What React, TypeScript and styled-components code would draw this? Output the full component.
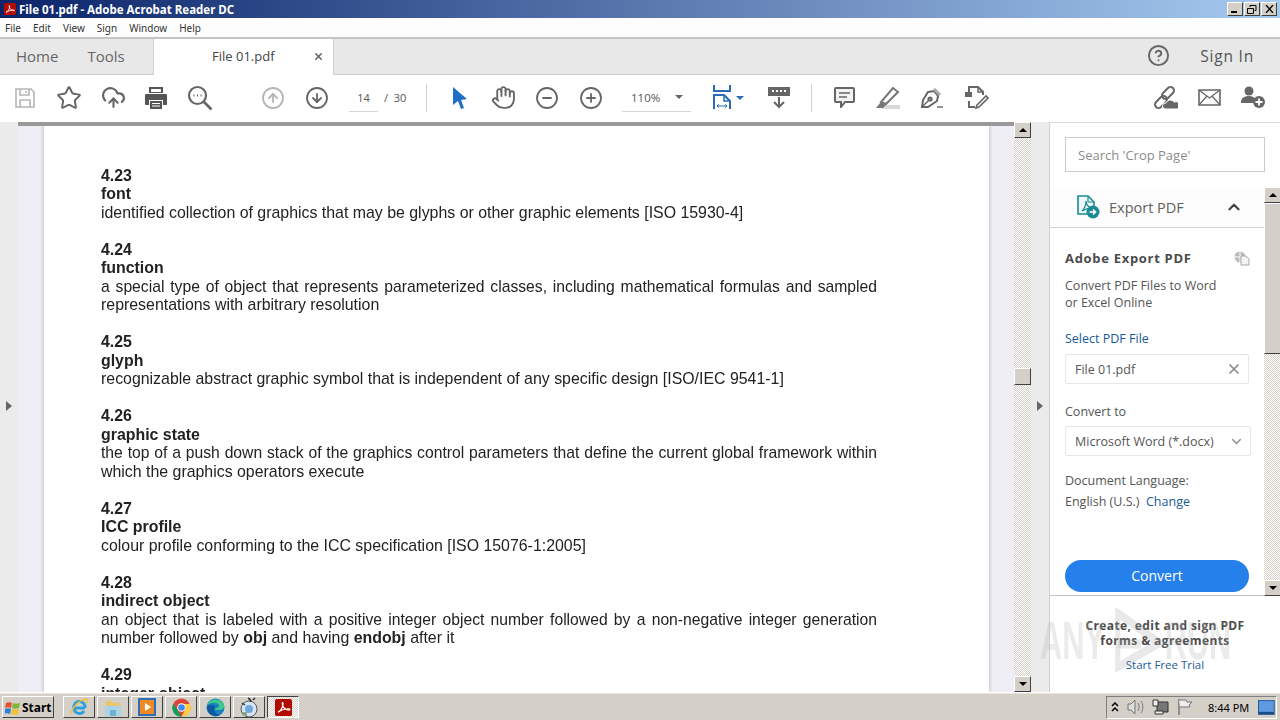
import React from "react";
import styled, { createGlobalStyle } from "styled-components";
import {
  Star,
  CloudUpload,
  CircleArrowUp,
  CircleArrowDown,
  CircleMinus,
  CirclePlus,
  CircleHelp,
  Hand,
  X,
  ChevronUp,
  ChevronDown,
} from "lucide-react";

const ui = `"Open Sans", "Noto Sans", sans-serif`;
const tahoma = `"Noto Sans", "DejaVu Sans", sans-serif`;

const GlobalStyle = createGlobalStyle`
  html, body { margin: 0; padding: 0; height: 100%; overflow: hidden; background: #fff; }
  * { box-sizing: border-box; }
`;

const Screen = styled.div`
  width: 1280px;
  height: 720px;
  display: flex;
  flex-direction: column;
  position: relative;
  overflow: hidden;
  font-family: ${ui};
`;

/* window chrome */
const TitleBar = styled.div`
  height: 18px;
  flex: none;
  display: flex;
  align-items: center;
  padding: 0 3px 0 4px;
  gap: 3px;
  background: linear-gradient(90deg, #0a246a 0%, #a6caf0 100%);
  color: #fff;
  font: 700 11.5px ${tahoma};
`;

const TitleText = styled.span`
  flex: 1;
`;

const WinButton = styled.div`
  width: 16px;
  height: 14px;
  margin-left: -2px;
  background: #d4d0c8;
  border: 1px solid;
  border-color: #fff #404040 #404040 #fff;
  display: flex;
  align-items: center;
  justify-content: center;
`;

const MenuBar = styled.div`
  height: 19px;
  flex: none;
  display: flex;
  align-items: center;
  gap: 12px;
  padding: 0 5px;
  background: #fdfdfd;
  color: #333;
  font: 400 10px ${tahoma};
`;

const TabRow = styled.div`
  height: 38px;
  flex: none;
  display: flex;
  background: #e8e8e8;
  border-top: 2px solid #c4c4c4;
  border-bottom: 1px solid #cfcfcf;
`;

const NavTabs = styled.div`
  width: 154px;
  display: flex;
  gap: 29px;
  padding: 0 0 2px 16px;
  align-items: center;
  color: #666;
  font-size: 15px;
  border-right: 1px solid #cfcfcf;
`;

const FileTab = styled.div`
  width: 180px;
  height: 36px;
  background: #fff;
  display: flex;
  align-items: center;
  justify-content: space-between;
  padding: 0 9px 2px 58px;
  color: #444;
  font-size: 13px;
  border-right: 1px solid #cfcfcf;
`;

const TabSpacer = styled.div`
  flex: 1;
`;

const RightTabs = styled.div`
  display: flex;
  align-items: center;
  gap: 30px;
  padding: 0 26px 2px 0;
  color: #555;
  font-size: 15.5px;
  letter-spacing: 0.8px;
`;

const Toolbar = styled.div`
  height: 47px;
  flex: none;
  display: flex;
  align-items: center;
  padding: 0 5px 2px 3px;
  background: #fff;
  color: #666;
`;

const ToolSlot = styled.div<{ $w?: number; $left?: number }>`
  width: ${(p) => p.$w ?? 44}px;
  margin-left: ${(p) => p.$left ?? 0}px;
  flex: none;
  height: 26px;
  display: flex;
  align-items: center;
  justify-content: center;
`;

const Divider = styled.div<{ $left: number; $right: number }>`
  width: 1px;
  height: 28px;
  flex: none;
  background: #d0d0d0;
  margin: 0 ${(p) => p.$right}px 0 ${(p) => p.$left}px;
`;

const PageBox = styled.div`
  width: 77px;
  display: flex;
  align-items: center;
  font-size: 11px;
  color: #555;
  margin-left: 10px;
`;

const PageNumber = styled.span`
  width: 29px;
  height: 28px;
  line-height: 28px;
  text-align: center;
  border-bottom: 1px solid #d8d8d8;
  margin-right: 6px;
`;

const ZoomBox = styled.div`
  width: 69px;
  height: 28px;
  margin-left: 9px;
  display: flex;
  align-items: center;
  justify-content: space-between;
  padding: 0 8px 0 9px;
  font-size: 11.5px;
  color: #555;
  border-bottom: 1px solid #d8d8d8;
`;

const Caret = styled.span<{ $color?: string }>`
  width: 0;
  height: 0;
  border-left: 4px solid transparent;
  border-right: 4px solid transparent;
  border-top: 4px solid ${(p) => p.$color ?? "#666"};
`;

const ToolGap = styled.div`
  flex: 1;
`;

/* main area */
const Main = styled.div`
  flex: 1;
  min-height: 0;
  display: flex;
  background: #fff;
`;

const Rail = styled.div<{ $w: number }>`
  width: ${(p) => p.$w}px;
  flex: none;
  background: #ebebeb;
  display: flex;
  align-items: center;
  justify-content: center;
  padding-bottom: 2px;
`;

const RailArrow = styled.span`
  width: 0;
  height: 0;
  border-top: 5px solid transparent;
  border-bottom: 5px solid transparent;
  border-left: 6px solid #666;
`;

const DocArea = styled.div`
  width: 996px;
  flex: none;
  display: flex;
  flex-direction: column;
  background: #eeeef4;
  overflow: hidden;
  border-top: 4px solid #999;
  padding: 0 25px 0 26px;
`;

const Page = styled.div`
  flex: 1;
  background: #fff;
  box-shadow: -2px 0 2px #d4d4dc, 2px 0 2px #d4d4dc;
  padding: 40.8px 112px 0 57px;
  color: #222;
  font: 400 15.9px/18.5px "Liberation Sans", Arial, sans-serif;
  filter: blur(0.4px);
  overflow: hidden;
`;

const Entry = styled.section`
  margin-bottom: 18.5px;
`;

const Heading = styled.div`
  font-weight: 700;
`;

const Body = styled.div<{ $full?: boolean }>`
  white-space: nowrap;
  ${(p) =>
    p.$full &&
    `white-space: normal; font-size: 15.7px; text-align: justify; text-align-last: justify;`}
`;

const ScrollTrack = styled.div<{ $h?: number }>`
  width: 17px;
  flex: none;
  display: flex;
  flex-direction: column;
  height: ${(p) => (p.$h ? `${p.$h}px` : "auto")};
  background: repeating-conic-gradient(#d4d0c8 0 25%, #fff 0 50%) 0 0 / 2px 2px;
`;

const ScrollButton = styled.div`
  width: 17px;
  height: 16px;
  flex: none;
  background: #d4d0c8;
  border: 1px solid;
  border-color: #fff #404040 #404040 #fff;
  display: flex;
  align-items: center;
  justify-content: center;
`;

const ScrollThumb = styled.div<{ $top: number; $h: number }>`
  width: 17px;
  height: ${(p) => p.$h}px;
  margin-top: ${(p) => p.$top}px;
  flex: none;
  background: #d4d0c8;
  border: 1px solid;
  border-color: #fff #404040 #404040 #fff;
`;

const Grow = styled.div`
  flex: 1;
`;

const ArrowGlyph = styled.span<{ $up?: boolean }>`
  width: 0;
  height: 0;
  border-left: 4px solid transparent;
  border-right: 4px solid transparent;
  ${(p) => (p.$up ? "border-bottom: 4px solid #000;" : "border-top: 4px solid #000;")}
`;

/* right panel */
const Panel = styled.aside`
  flex: 1;
  border-left: 1px solid #cfcfcf;
  border-top: 1px solid #d8d8d8;
  display: flex;
  flex-direction: column;
  background: #fff;
  color: #555;
  font-size: 12.5px;
  min-width: 0;
`;

const SearchBox = styled.div`
  margin: 14px 15px 0 15px;
  height: 35px;
  border: 1px solid #ccc;
  padding-left: 12px;
  display: flex;
  align-items: center;
  color: #8c8c8c;
  font-size: 13px;
  padding-top: 1px;
`;

const PanelBody = styled.div`
  margin-top: 15px;
  display: flex;
  flex: 1;
  min-height: 0;
`;

const PanelColumn = styled.div`
  width: 214px;
  flex: none;
  display: flex;
  flex-direction: column;
`;

const ExportHeader = styled.div`
  height: 41px;
  flex: none;
  display: flex;
  align-items: center;
  padding: 0 21px 0 26px;
  gap: 9px;
  border-bottom: 1px solid #d0d0d0;
  background: #fdfdfd;
  color: #606060;
  font-size: 14.5px;
`;

const ExportTitle = styled.span`
  flex: 1;
`;

const ExportBody = styled.div`
  height: 368px;
  flex: none;
  padding: 22px 0 0 15px;
  border-bottom: 1px solid #c4c4c4;
  display: flex;
  flex-direction: column;
  color: #555;
  line-height: 17px;
`;

const AppTitle = styled.div`
  display: flex;
  justify-content: space-between;
  align-items: center;
  width: 185px;
  font-weight: 700;
  font-size: 13px;
  letter-spacing: 0.7px;
  color: #4b4b4b;
  margin-bottom: 10px;
`;

const Link = styled.span`
  color: #1a5a96;
`;

const Field = styled.div<{ $w: number; $top: number }>`
  width: ${(p) => p.$w}px;
  height: 30px;
  margin-top: ${(p) => p.$top}px;
  border: 1px solid #e6e6e6;
  border-radius: 2px;
  padding: 0 6px 0 9px;
  display: flex;
  align-items: center;
  justify-content: space-between;
  color: #555;
  flex: none;
`;

const Label = styled.div<{ $top: number }>`
  margin-top: ${(p) => p.$top}px;
`;

const ConvertButton = styled.div`
  width: 184px;
  height: 32px;
  flex: none;
  margin-top: 50px;
  border-radius: 16px;
  background: #2680eb;
  color: #fff;
  font-size: 14px;
  display: flex;
  align-items: center;
  justify-content: center;
  padding-bottom: 1px;
`;

const Promo = styled.div`
  padding-top: 22px;
  text-align: center;
  width: 230px;
  color: #4b4b4b;
  font-weight: 700;
  font-size: 12px;
  letter-spacing: 0.4px;
  line-height: 15px;
`;

const PromoLink = styled.div`
  margin-top: 9px;
  font-weight: 400;
  font-size: 11.5px;
  letter-spacing: 0;
  color: #1a5a96;
`;

const Watermark = styled.div`
  position: absolute;
  left: 1040px;
  top: 608px;
  height: 64px;
  pointer-events: none;
  display: flex;
  align-items: center;
  font: 700 53px/1 "Liberation Sans", sans-serif;
  color: rgba(170, 170, 170, 0.24);
  transform: scaleX(0.58);
  transform-origin: left center;
  white-space: nowrap;
`;

/* taskbar */
const Taskbar = styled.div`
  height: 28px;
  flex: none;
  background: #d4d0c8;
  border-top: 1px solid #fff;
  display: flex;
  align-items: center;
  padding: 1px 3px 0 2px;
  box-shadow: inset 0 1px 0 #e8e6e1;
`;

const StartButton = styled.div`
  width: 52px;
  height: 22px;
  display: flex;
  align-items: center;
  gap: 1px;
  padding-left: 2px;
  background: #d4d0c8;
  border: 1px solid;
  border-color: #fff #404040 #404040 #fff;
  font: 700 12px ${tahoma};
  color: #000;
  margin-right: 9px;
`;

const TaskButton = styled.div<{ $active?: boolean }>`
  width: 32px;
  height: 22px;
  flex: none;
  margin-right: 2px;
  display: flex;
  align-items: center;
  justify-content: center;
  border: 1px solid;
  border-color: ${(p) =>
    p.$active ? "#404040 #fff #fff #404040" : "#fff #404040 #404040 #fff"};
  background: ${(p) =>
    p.$active
      ? "repeating-conic-gradient(#d4d0c8 0 25%, #fff 0 50%) 0 0 / 2px 2px"
      : "#d4d0c8"};
`;

const Tray = styled.div`
  margin-left: auto;
  width: 171px;
  height: 23px;
  border: 1px solid;
  border-color: #808080 #fff #fff #808080;
  display: flex;
  align-items: center;
  padding: 0 1px 0 4px;
  font: 400 11px ${tahoma};
  color: #000;
`;

const TrayIcons = styled.div`
  display: flex;
  align-items: center;
  gap: 8px;
`;

const Clock = styled.span`
  margin-left: 15px;
  width: 51px;
`;

/* drawn icons */
const stroke = { fill: "none", stroke: "currentColor", strokeWidth: 2 } as const;

const SaveIcon = () => (
  <svg width="22" height="22" viewBox="0 0 22 22" {...stroke} strokeWidth={1.6} color="#b5b5b5">
    <path d="M2 2h15l3 3v15H2z" />
    <path d="M6 2v6h9V2M12 4v2M6 20v-7h10v7" />
  </svg>
);

const PrinterIcon = () => (
  <svg width="24" height="24" viewBox="0 0 24 24">
    <path fill="#555" d="M5 1h14v6H5zM2 8h20c1 0 1 1 1 1v9c0 1-1 1-1 1h-3v-5H5v5H2c-1 0-1-1-1-1V9s0-1 1-1z" />
    <path fill="#555" d="M6 15h12v8H6z" />
    <path fill="#fff" d="M8 17h8v1H8zM8 19.500h8v1H8zM7 3h10v3H7z" />
  </svg>
);

const FindIcon = () => (
  <svg width="26" height="26" viewBox="0 0 26 26" {...stroke} strokeWidth={2.2}>
    <circle cx="10.500" cy="10.500" r="8.500" />
    <path d="M16.500 16.500l8 8" strokeWidth={2.6} />
    <path d="M6.500 10.500h1M10 10.500h1M13.500 10.500h1" strokeWidth={2} />
  </svg>
);

const CursorIcon = () => (
  <svg width="16" height="22" viewBox="0 0 16 22">
    <path fill="#1f6fc4" d="M1 0l14 12-6 1 3 8-3 1-3-8-5 4z" />
  </svg>
);

const FitIcon = () => (
  <svg width="19" height="25" viewBox="0 0 19 25" fill="none" stroke="#2a6db5" strokeWidth="2">
    <path d="M1 0v6h16V0" />
    <path d="M1 24V10h10l6 6v8" />
    <path d="M11 10v6h6" strokeWidth="1.5" />
    <path d="M4 21h10M4 21l2-1.600M4 21l2 1.600M14 21l-2-1.600M14 21l-2 1.600" strokeWidth="1" />
  </svg>
);

const ReadIcon = () => (
  <svg width="22" height="22" viewBox="0 0 22 22">
    <path fill="#666" d="M0 0h22v9H0z" />
    <path fill="#fff" d="M4 3h2v2H4zM8 3h2v2H8zM12 3h2v2h-2zM16 3h2v2h-2z" />
    <path fill="none" stroke="#666" strokeWidth="2" d="M11 10v10M6 15l5 5 5-5" />
  </svg>
);

const CommentIcon = () => (
  <svg width="21" height="21" viewBox="0 0 21 21">
    <path fill="#f2f2f2" stroke="#666" strokeWidth="2" d="M2 1h17a1 1 0 0 1 1 1v12a1 1 0 0 1-1 1h-8l-4 5v-5H2a1 1 0 0 1-1-1V2a1 1 0 0 1 1-1z" />
    <path stroke="#666" strokeWidth="1.300" d="M5 6h11M5 10h8" />
  </svg>
);

const HighlightIcon = () => (
  <svg width="24" height="22" viewBox="0 0 24 22">
    <path fill="#d8d8d8" d="M6 18h18v4H6z" />
    <path fill="none" stroke="#777" strokeWidth="2" d="M17 1l5 4-12 12-5-2z" />
    <path fill="#777" d="M5 15l5 3-3 3H0z" />
  </svg>
);

const SignIcon = () => (
  <svg width="24" height="22" viewBox="0 0 24 22" fill="none" stroke="#666" strokeWidth="2">
    <path d="M8 5l6-1 4 5-1 5-9 6H2l1-7z" />
    <path d="M2 20l7-7" strokeWidth="1.400" />
    <circle cx="10" cy="12" r="1.600" />
    <path d="M14 2l6 6" stroke="#aaa" strokeWidth="3" />
    <path d="M17 20h6" strokeWidth="1.400" />
  </svg>
);

const EditPdfIcon = () => (
  <svg width="25" height="23" viewBox="0 0 25 23" fill="none" stroke="#666" strokeWidth="2">
    <path d="M5 6V1h9l5 5v3M5 15v6h6" />
    <path d="M14 1v5h5" strokeWidth="1.500" />
    <path fill="#666" stroke="none" d="M1 6h7v5H1z" />
    <path d="M13 19l9-9 2 2-9 9-3 1z" strokeWidth="1.600" />
  </svg>
);

const LinkCloudIcon = () => (
  <svg width="25" height="24" viewBox="0 0 25 24">
    <g fill="none" stroke="#666" strokeWidth="2">
      <rect x="1" y="12.500" width="14" height="7" rx="3.500" transform="rotate(-45 8 16)" />
      <rect x="8" y="3.500" width="14" height="7" rx="3.500" transform="rotate(-45 15 7)" />
    </g>
    <path fill="#666" stroke="#fff" strokeWidth="1" d="M12 23a3 3 0 0 1 1-6 4.500 4.500 0 0 1 8-1 3.500 3.500 0 0 1 3.500 7z" />
  </svg>
);

const MailIcon = () => (
  <svg width="23" height="17" viewBox="0 0 23 17" fill="none" stroke="#666" strokeWidth="1.600">
    <path d="M1 1h21v15H1z" />
    <path d="M1 1l10.500 8L22 1M1 16l8-9M22 16l-8-9" strokeWidth="1.200" />
  </svg>
);

const AddUserIcon = () => (
  <svg width="25" height="23" viewBox="0 0 25 23">
    <circle cx="8" cy="5" r="4.500" fill="#666" />
    <path fill="#666" d="M0 17c0-5 3-7 8-7 3 0 5 1 6 3a7 7 0 0 0-2 4z" />
    <circle cx="18" cy="16" r="6" fill="#666" />
    <path stroke="#fff" strokeWidth="1.800" d="M14.500 16h7M18 12.500v7" />
  </svg>
);

const ExportIcon = () => (
  <svg width="24" height="24" viewBox="0 0 24 24">
    <path fill="#eef6f6" stroke="#1b8a94" strokeWidth="1.600" d="M2 1h10l6 6v12H2z" />
    <path fill="none" stroke="#1b8a94" strokeWidth="1.200" d="M12 1v6h6M6 16c3-3 4-7 4-10 0 3 2 6 6 7-4 0-7 1-10 3z" />
    <circle cx="17" cy="17" r="6.500" fill="#1b8a94" />
    <path stroke="#fff" strokeWidth="1.600" fill="none" d="M13.500 17h6M17 14.500l2.500 2.500-2.500 2.500" />
  </svg>
);

const ShareIcon = () => (
  <svg width="16" height="15" viewBox="0 0 16 15">
    <circle cx="6" cy="6" r="5.500" fill="#bbb" />
    <path stroke="#fff" d="M6 0v12M0 6h12" />
    <path fill="#f4f4f4" stroke="#aaa" d="M7 5h5l3 3v6H7z" />
  </svg>
);

const StartLogo = () => (
  <svg width="16" height="15" viewBox="0 0 16 15">
    <path fill="#e2542a" d="M1 3c2-1 4-1 6 0l-1 5C4 7 2 7 0 8z" />
    <path fill="#7cb63b" d="M8 3c2 1 4 1 7 0l-1 5c-2 1-5 1-7 0z" />
    <path fill="#2f7fd6" d="M0 9c2-1 4-1 6 0l-1 5c-2-1-4-1-6 0z" />
    <path fill="#f2c230" d="M7 9c2 1 4 1 7 0l-1 5c-3 1-5 1-7 0z" />
  </svg>
);

const IeIcon = () => (
  <svg width="20" height="20" viewBox="0 0 20 20" fill="none">
    <path stroke="#2e9fe0" strokeWidth="3" d="M16 11H5a5.500 5.500 0 0 1 11-2v2M5 12a5.500 5.500 0 0 0 10 2" />
    <path stroke="#f0c030" strokeWidth="1.500" d="M3 17C0 15 9 3 17 2c2 0 2 2 1 4" />
  </svg>
);

const FolderIcon = () => (
  <svg width="20" height="19" viewBox="0 0 20 19">
    <path fill="#e8c66c" d="M3 3h6l2 2h6v4H3z" />
    <path fill="#a9d4e8" d="M2 8h16v10H2z" />
    <path fill="#6fb0d0" d="M7 12h6v6H7z" />
  </svg>
);

const PlayerIcon = () => (
  <svg width="20" height="20" viewBox="0 0 20 20">
    <path fill="#2f6fb5" d="M1 1h18v18H1z" />
    <path fill="#f08a24" d="M3 3h14v14H3z" />
    <path fill="#fff" d="M8 6l6 4-6 4z" />
  </svg>
);

const ChromeIcon = () => (
  <svg width="19" height="19" viewBox="0 0 19 19">
    <circle cx="9.500" cy="9.500" r="9" fill="#db4437" />
    <path fill="#0f9d58" d="M1.500 5.500L6 13l3.500 5.900A9 9 0 0 1 1.500 5.500z" />
    <path fill="#ffcd40" d="M9.500 6H18a9 9 0 0 1-8.500 12.500L14 10z" />
    <circle cx="9.500" cy="9.500" r="4.300" fill="#fff" />
    <circle cx="9.500" cy="9.500" r="3.300" fill="#4285f4" />
  </svg>
);

const EdgeIcon = () => (
  <svg width="19" height="19" viewBox="0 0 19 19">
    <circle cx="9.500" cy="9.500" r="9" fill="#1b7fc4" />
    <path fill="#3ec98a" d="M1 7C3 1 13-1 17 5c2 3 1 7-3 7H9c0-3 5-2 4-5-2-3-8-3-12 0z" />
    <path fill="#0d5a9c" d="M1 9c3-3 7-3 8 0-2 3 0 7 5 8-6 3-13-1-13-8z" />
  </svg>
);

const SetupIcon = () => (
  <svg width="20" height="21" viewBox="0 0 20 21">
    <circle cx="10" cy="12" r="8" fill="#d7e6f5" stroke="#555" />
    <circle cx="10" cy="12" r="4" fill="#6ea7de" />
    <path stroke="#333" strokeWidth="1.500" d="M9 1c2 1 3 2 3 4M14 3l2-2M3 6l3 2" />
    <path fill="#8a8" d="M4 15h4v4H4z" />
  </svg>
);

const AcrobatIcon = ({ size }: { size: number }) => (
  <svg width={size} height={size} viewBox="0 0 20 20">
    <rect width="20" height="20" rx="2" fill="#b30b00" />
    <path fill="none" stroke="#fff" strokeWidth="1.400" d="M3.500 15.500c3-1 6-6 6-10 0-2-1.500-1.500-1 .5 1 4 4 7 8 7 1.500 0 1.500-1.500-.5-1.500-4 0-9 2-12.500 4z" />
  </svg>
);

const SpeakerIcon = () => (
  <svg width="17" height="16" viewBox="0 0 17 16" fill="none" stroke="#777">
    <path d="M1 5h3l4-4v14l-4-4H1z" fill="#ddd" />
    <path d="M11 4c1.500 2 1.500 6 0 8M14 2c2.500 3 2.500 9 0 12" />
  </svg>
);

const NetworkIcon = () => (
  <svg width="17" height="16" viewBox="0 0 17 16">
    <path fill="#777" stroke="#333" d="M5 3h11v10H5z" />
    <path fill="#eee" stroke="#333" d="M1 1h5v6H1zM3 12h8v3H3z" />
  </svg>
);

const FlagIcon = () => (
  <svg width="16" height="16" viewBox="0 0 16 16" fill="none" stroke="#777">
    <path d="M2 0v16" strokeWidth="1.500" />
    <path d="M2 1h7l1 2h5l-3 3 1 2H3" fill="#eee" />
  </svg>
);

const DesktopIcon = () => (
  <svg width="17" height="15" viewBox="0 0 17 15">
    <rect width="17" height="15" fill="#235a9e" />
    <path fill="#5d9ae0" d="M1 1h15v11H1z" />
    <path fill="#1c4a86" d="M1 12h15v2H1z" />
  </svg>
);

type EntryData = { id: string; term: string; lines: React.ReactNode[]; full?: boolean };

const entries: EntryData[] = [
  { id: "4.23", term: "font", lines: ["identified collection of graphics that may be glyphs or other graphic elements [ISO 15930-4]"] },
  {
    id: "4.24",
    term: "function",
    full: true,
    lines: [
      "a special type of object that represents parameterized classes, including mathematical formulas and sampled",
      "representations with arbitrary resolution",
    ],
  },
  { id: "4.25", term: "glyph", lines: ["recognizable abstract graphic symbol that is independent of any specific design [ISO/IEC 9541-1]"] },
  {
    id: "4.26",
    term: "graphic state",
    full: true,
    lines: [
      "the top of a push down stack of the graphics control parameters that define the current global framework within",
      "which the graphics operators execute",
    ],
  },
  { id: "4.27", term: "ICC profile", lines: ["colour profile conforming to the ICC specification [ISO 15076-1:2005]"] },
  {
    id: "4.28",
    term: "indirect object",
    full: true,
    lines: [
      "an object that is labeled with a positive integer object number followed by a non-negative integer generation",
      <>
        number followed by <b>obj</b> and having <b>endobj</b> after it
      </>,
    ],
  },
  { id: "4.29", term: "integer object", lines: [] },
];

const App: React.FC = () => {
  return (
    <Screen>
      <GlobalStyle />
      <TitleBar>
        <AcrobatIcon size={12} />
        <TitleText>File 01.pdf - Adobe Acrobat Reader DC</TitleText>
        <WinButton>
          <svg width="8" height="8" viewBox="0 0 8 8"><path d="M0 6h6v2H0z" /></svg>
        </WinButton>
        <WinButton>
          <svg width="10" height="9" viewBox="0 0 10 9" fill="none" stroke="#000"><path d="M3 2V.5h6v5H7.500M.5 3.500h6v5h-6z" /></svg>
        </WinButton>
        <WinButton>
          <svg width="9" height="8" viewBox="0 0 9 8" stroke="#000" strokeWidth="1.300"><path d="M1 0l7 8M8 0L1 8" /></svg>
        </WinButton>
      </TitleBar>

      <MenuBar>
        {["File", "Edit", "View", "Sign", "Window", "Help"].map((m) => (
          <span key={m}>{m}</span>
        ))}
      </MenuBar>

      <TabRow>
        <NavTabs>
          <span>Home</span>
          <span>Tools</span>
        </NavTabs>
        <FileTab>
          <span>File 01.pdf</span>
          <X size={11} strokeWidth={3.5} color="#666" />
        </FileTab>
        <TabSpacer />
        <RightTabs>
          <CircleHelp size={23} strokeWidth={2} color="#666" />
          <span>Sign In</span>
        </RightTabs>
      </TabRow>

      <Toolbar>
        <ToolSlot><SaveIcon /></ToolSlot>
        <ToolSlot><Star size={26} strokeWidth={1.8} /></ToolSlot>
        <ToolSlot><CloudUpload size={25} strokeWidth={2} /></ToolSlot>
        <ToolSlot $left={-1}><PrinterIcon /></ToolSlot>
        <ToolSlot><FindIcon /></ToolSlot>
        <ToolSlot $left={29}><CircleArrowUp size={24} strokeWidth={1.8} color="#b5b5b5" /></ToolSlot>
        <ToolSlot><CircleArrowDown size={24} strokeWidth={1.8} /></ToolSlot>
        <PageBox>
          <PageNumber>14</PageNumber>
          <span>/ &nbsp;30</span>
        </PageBox>
        <Divider $left={0} $right={10} />
        <ToolSlot $left={1} $w={43}><CursorIcon /></ToolSlot>
        <ToolSlot><Hand size={25} strokeWidth={1.8} /></ToolSlot>
        <ToolSlot><CircleMinus size={24} strokeWidth={1.8} /></ToolSlot>
        <ToolSlot><CirclePlus size={24} strokeWidth={1.8} /></ToolSlot>
        <ZoomBox>
          <span>110%</span>
          <Caret />
        </ZoomBox>
        <ToolSlot $w={19} $left={22}><FitIcon /></ToolSlot>
        <ToolSlot $w={16}><Caret $color="#2a6db5" /></ToolSlot>
        <ToolSlot $left={9}><ReadIcon /></ToolSlot>
        <Divider $left={10} $right={10} />
        <ToolSlot><CommentIcon /></ToolSlot>
        <ToolSlot><HighlightIcon /></ToolSlot>
        <ToolSlot><SignIcon /></ToolSlot>
        <ToolSlot><EditPdfIcon /></ToolSlot>
        <ToolGap />
        <ToolSlot><LinkCloudIcon /></ToolSlot>
        <ToolSlot><MailIcon /></ToolSlot>
        <ToolSlot><AddUserIcon /></ToolSlot>
      </Toolbar>

      <Main>
        <Rail $w={18}><RailArrow /></Rail>
        <DocArea>
          <Page>
            {entries.map((e) => (
              <Entry key={e.id}>
                <Heading>{e.id}</Heading>
                <Heading>{e.term}</Heading>
                {e.lines.map((line, i) => (
                  <Body key={i} $full={e.full && i === 0}>
                    {line}
                  </Body>
                ))}
              </Entry>
            ))}
          </Page>
        </DocArea>
        <ScrollTrack>
          <ScrollButton><ArrowGlyph $up /></ScrollButton>
          <ScrollThumb $top={230} $h={17} />
          <Grow />
          <ScrollButton><ArrowGlyph /></ScrollButton>
        </ScrollTrack>
        <Rail $w={18}><RailArrow /></Rail>
        <Panel>
          <SearchBox>Search 'Crop Page'</SearchBox>
          <PanelBody>
            <PanelColumn>
              <ExportHeader>
                <ExportIcon />
                <ExportTitle>Export PDF</ExportTitle>
                <ChevronUp size={18} strokeWidth={3} color="#444" />
              </ExportHeader>
              <ExportBody>
                <AppTitle>
                  <span>Adobe Export PDF</span>
                  <ShareIcon />
                </AppTitle>
                <div>Convert PDF Files to Word</div>
                <div>or Excel Online</div>
                <Label $top={19}><Link>Select PDF File</Link></Label>
                <Field $w={184} $top={7}>
                  <span>File 01.pdf</span>
                  <X size={16} strokeWidth={2.5} color="#888" />
                </Field>
                <Label $top={19}>Convert to</Label>
                <Field $w={186} $top={6}>
                  <span>Microsoft Word (*.docx)</span>
                  <ChevronDown size={15} strokeWidth={2.5} color="#999" />
                </Field>
                <Label $top={16}>Document Language:</Label>
                <Label $top={4}>
                  English (U.S.) &nbsp;<Link>Change</Link>
                </Label>
                <ConvertButton>Convert</ConvertButton>
              </ExportBody>
              <Promo>
                <div>Create, edit and sign PDF</div>
                <div>forms &amp; agreements</div>
                <PromoLink>Start Free Trial</PromoLink>
              </Promo>
            </PanelColumn>
            <ScrollTrack $h={409}>
              <ScrollButton><ArrowGlyph $up /></ScrollButton>
              <ScrollThumb $top={0} $h={151} />
              <Grow />
              <ScrollButton><ArrowGlyph /></ScrollButton>
            </ScrollTrack>
          </PanelBody>
        </Panel>
      </Main>

      <Taskbar>
        <StartButton>
          <StartLogo />
          Start
        </StartButton>
        <TaskButton><IeIcon /></TaskButton>
        <TaskButton><FolderIcon /></TaskButton>
        <TaskButton><PlayerIcon /></TaskButton>
        <TaskButton><ChromeIcon /></TaskButton>
        <TaskButton><EdgeIcon /></TaskButton>
        <TaskButton><SetupIcon /></TaskButton>
        <TaskButton $active><AcrobatIcon size={17} /></TaskButton>
        <Tray>
          <TrayIcons>
            <svg width="8" height="10" viewBox="0 0 8 10" fill="none" stroke="#000" strokeWidth="1.500"><path d="M1 4l3-3 3 3M1 9l3-3 3 3" /></svg>
            <SpeakerIcon />
            <NetworkIcon />
            <FlagIcon />
          </TrayIcons>
          <Clock>8:44 PM</Clock>
          <DesktopIcon />
        </Tray>
      </Taskbar>

      <Watermark>
        ANY
        <svg width="103" height="64" viewBox="0 0 103 64" fill="none" stroke="rgba(170,170,170,0.26)" strokeWidth="9">
          <path d="M22 5l72 30-72 24z" />
          <path d="M22 36h40" />
        </svg>
        RUN
      </Watermark>
    </Screen>
  );
};

export default App;
